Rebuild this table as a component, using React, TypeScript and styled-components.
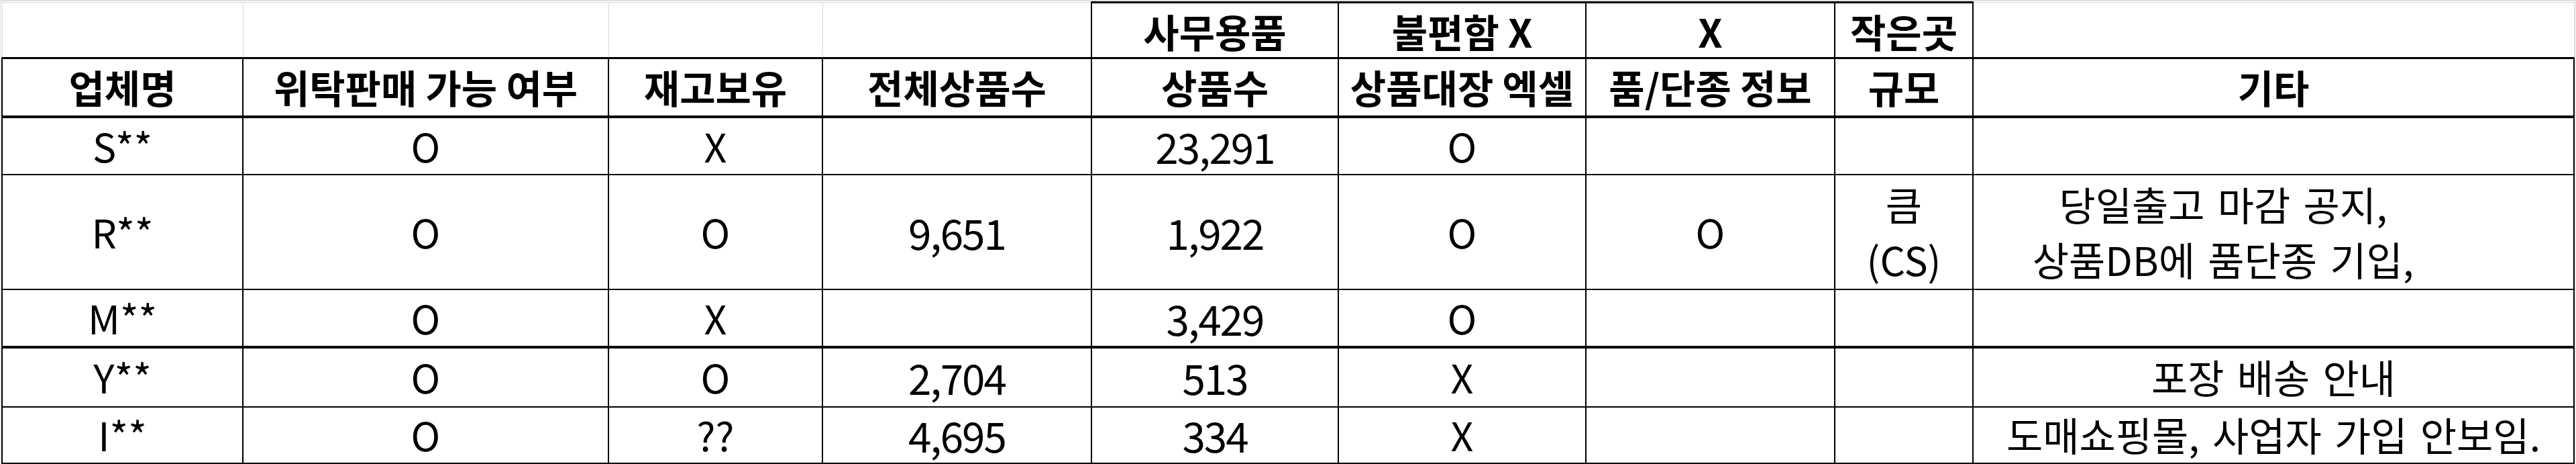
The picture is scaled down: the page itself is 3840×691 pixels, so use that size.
import React from 'react'
import styled, { createGlobalStyle, css } from 'styled-components'

const GlobalStyle = createGlobalStyle`
  html, body {
    margin: 0;
    padding: 0;
    background: #ffffff;
  }
  body {
    font-family: 'Noto Sans CJK KR', 'Noto Sans', sans-serif;
    color: #000;
  }
`

type Kind = 'ko' | 'latin' | 'num'

interface CellData {
  text?: string
  lines?: string[]
  kind?: Kind
  offset?: boolean
}

const widths = [359, 545, 319, 401, 368, 369, 371, 206, 896]

const topRow: (string | null)[] = [null, null, null, null, '사무용품', '불편함 X', 'X', '작은곳', null]

const headRow = ['업체명', '위탁판매 가능 여부', '재고보유', '전체상품수', '상품수', '상품대장 엑셀', '품/단종 정보', '규모', '기타']

interface RowData {
  height: number
  thickBottom?: boolean
  cells: CellData[]
}

const O: CellData = { text: 'O', kind: 'latin' }
const X: CellData = { text: 'X', kind: 'latin' }
const E: CellData = {}
const n = (text: string): CellData => ({ text, kind: 'num' })
const name = (text: string): CellData => ({ text, kind: 'latin' })

const rows: RowData[] = [
  { height: 86, cells: [name('S**'), O, X, E, n('23,291'), O, E, E, E] },
  {
    height: 171,
    cells: [
      name('R**'),
      O,
      O,
      n('9,651'),
      n('1,922'),
      O,
      O,
      { lines: ['큼', '(CS)'], kind: 'ko' },
      { lines: ['당일출고 마감 공지,', '상품DB에 품단종 기입,'], kind: 'ko', offset: true },
    ],
  },
  { height: 86, thickBottom: true, cells: [name('M**'), O, X, E, n('3,429'), O, E, E, E] },
  {
    height: 89,
    cells: [name('Y**'), O, O, n('2,704'), n('513'), X, E, E, { text: '포장 배송 안내', kind: 'ko' }],
  },
  {
    height: 84,
    cells: [
      name('I**'),
      O,
      { text: '??', kind: 'latin' },
      n('4,695'),
      n('334'),
      X,
      E,
      E,
      { text: '도매쇼핑몰, 사업자 가입 안보임.', kind: 'ko' },
    ],
  },
]

const Sheet = styled.div`
  width: 3840px;
  height: 691px;
  box-sizing: border-box;
  border-top: 2px solid #e1e1e1;
  overflow: hidden;
  background: #ececec;
`

const Grid = styled.table`
  table-layout: fixed;
  border-collapse: collapse;
  width: ${widths.reduce((a, b) => a + b, 0)}px;
  margin-left: 2px;
  background: #ffffff;
`

const Col = styled.col<{ $w: number }>`
  width: ${({ $w }) => $w}px;
`

const Row = styled.tr<{ $h: number }>`
  height: ${({ $h }) => $h}px;
`

const Cell = styled.td<{
  $grid?: boolean
  $head?: boolean
  $band?: 'top' | 'head'
  $thickBottom?: boolean
  $kind?: Kind
  $offset?: boolean
}>`
  padding: 0;
  text-align: center;
  vertical-align: middle;
  white-space: nowrap;
  overflow: visible;
  line-height: 1.1;
  border: 2px solid #000;
  font-size: 59px;
  word-spacing: 6px;
  font-weight: 400;

  ${({ $head }) =>
    $head &&
    css`
      font-size: 58px;
      font-weight: 700;
      word-spacing: 0;
    `}

  ${({ $kind }) =>
    $kind === 'latin' &&
    css`
      font-size: 59px;
    `}

  ${({ $kind }) =>
    $kind === 'num' &&
    css`
      font-size: 62px;
      letter-spacing: -2px;
    `}

  ${({ $offset }) =>
    $offset &&
    css`
      padding-right: 150px;
    `}

  ${({ $band }) =>
    $band === 'top' &&
    css`
      border-top-width: 3px;
      padding-top: 4px;
    `}

  ${({ $band }) =>
    $band === 'head' &&
    css`
      border-top-width: 3px;
      border-bottom-width: 4px;
    `}

  ${({ $thickBottom }) =>
    $thickBottom &&
    css`
      border-bottom-width: 4px;
    `}

  ${({ $grid }) =>
    $grid &&
    css`
      border: 1px solid #d9d9d9;
    `}
`

const Line = styled.div`
  line-height: 82px;
`

export default function App() {
  return (
    <>
      <GlobalStyle />
      <Sheet>
        <Grid>
          <colgroup>
            {widths.map((w, i) => (
              <Col key={i} $w={w} />
            ))}
          </colgroup>
          <tbody>
            <Row $h={83}>
              {topRow.map((t, i) =>
                t === null ? (
                  <Cell key={i} $grid />
                ) : (
                  <Cell key={i} $head $band="top">
                    {t}
                  </Cell>
                ),
              )}
            </Row>
            <Row $h={87}>
              {headRow.map((t, i) => (
                <Cell key={i} $head $band="head">
                  {t}
                </Cell>
              ))}
            </Row>
            {rows.map((r, ri) => (
              <Row key={ri} $h={r.height}>
                {r.cells.map((c, ci) => (
                  <Cell key={ci} $kind={c.kind} $offset={c.offset} $thickBottom={r.thickBottom}>
                    {c.lines ? c.lines.map((l, li) => <Line key={li}>{l}</Line>) : c.text}
                  </Cell>
                ))}
              </Row>
            ))}
          </tbody>
        </Grid>
      </Sheet>
    </>
  )
}
